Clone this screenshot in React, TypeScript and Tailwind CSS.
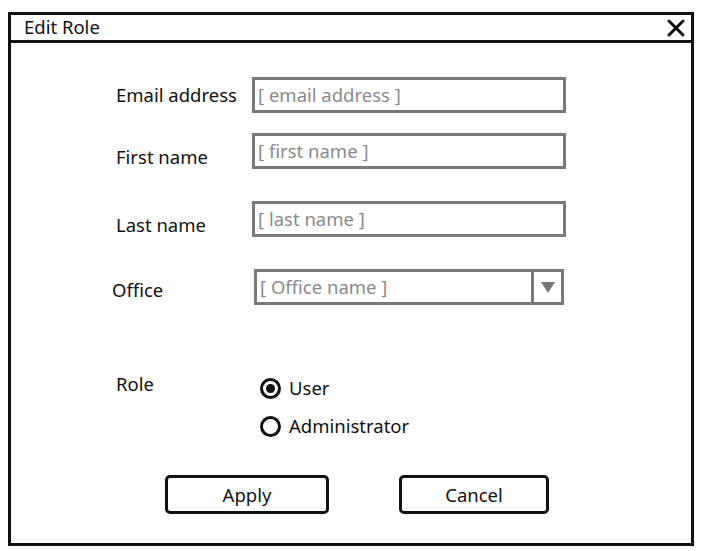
import React from "react";

const font = { fontFamily: '"Noto Sans", "Open Sans", sans-serif' };

function Field({ label, placeholder, labelClass }: { label: string; placeholder: string; labelClass: string }) {
  return (
    <div className="flex items-center h-[36px]">
      <div className={`w-[136px] text-[18.5px] leading-[22px] text-[#111] ${labelClass}`}>{label}</div>
      <div className="w-[314px] h-[36px] border-[3px] border-[#7a7a7a] flex items-center pl-[3px] text-[18.5px] text-[#8a8a8a]">
        {placeholder}
      </div>
    </div>
  );
}

export default function App() {
  return (
    <div className="w-[703px] h-[551px] bg-white pt-[12px] pl-[8px]" style={font}>
      <div className="w-[686px] h-[534px] border-[3px] border-[#111] flex flex-col">
        <div className="h-[28px] border-b-[3px] border-[#111] flex items-center justify-between pl-[13px] pr-[6px] shrink-0">
          <span className="text-[18.5px] text-[#111] leading-none">Edit Role</span>
          <svg width="18" height="18" viewBox="0 0 18 18">
            <path d="M2 2 L16 16 M16 2 L2 16" stroke="#111" strokeWidth="3" strokeLinecap="round" />
          </svg>
        </div>
        <div className="flex flex-col pl-[105px] pt-[34px]">
          <Field label="Email address" placeholder="[ email address ]" labelClass="" />
          <div className="mt-[20px]">
            <Field label="First name" placeholder="[ first name ]" labelClass="pt-[12px]" />
          </div>
          <div className="mt-[32px]">
            <Field label="Last name" placeholder="[ last name ]" labelClass="pt-[12px]" />
          </div>
          <div className="mt-[32px] flex items-center h-[36px]">
            <div className="w-[142px] -ml-[4px] text-[18.5px] leading-[22px] text-[#111] pt-[6px]">Office</div>
            <div className="w-[310px] h-[36px] border-[3px] border-[#7a7a7a] flex items-center">
              <div className="flex-1 h-full flex items-center pl-[3px] text-[18.5px] text-[#8a8a8a] border-r-[3px] border-[#7a7a7a]">
                [ Office name ]
              </div>
              <div className="w-[27px] h-full flex items-center justify-center">
                <svg width="14" height="11" viewBox="0 0 14 11">
                  <path d="M0 0 L14 0 L7 11 Z" fill="#777" />
                </svg>
              </div>
            </div>
          </div>
          <div className="mt-[64px] flex">
            <div className="w-[144px] text-[18.5px] leading-[22px] text-[#111] pt-[4px]">Role</div>
            <div className="flex flex-col gap-[17px] pt-[9px]">
              <div className="flex items-center gap-[8px]">
                <div className="w-[21px] h-[21px] rounded-full border-[3px] border-[#111] flex items-center justify-center">
                  <div className="w-[9px] h-[9px] rounded-full bg-[#111]" />
                </div>
                <span className="text-[18.5px] text-[#111] leading-none">User</span>
              </div>
              <div className="flex items-center gap-[8px]">
                <div className="w-[21px] h-[21px] rounded-full border-[3px] border-[#111]" />
                <span className="text-[18.5px] text-[#111] leading-none">Administrator</span>
              </div>
            </div>
          </div>
          <div className="mt-[38px] flex gap-[70px] pl-[49px]">
            <div className="w-[164px] h-[39px] border-[3px] border-[#111] rounded-[5px] flex items-center justify-center text-[18.5px] text-[#111]">
              Apply
            </div>
            <div className="w-[150px] h-[39px] border-[3px] border-[#111] rounded-[5px] flex items-center justify-center text-[18.5px] text-[#111]">
              Cancel
            </div>
          </div>
        </div>
      </div>
    </div>
  );
}
